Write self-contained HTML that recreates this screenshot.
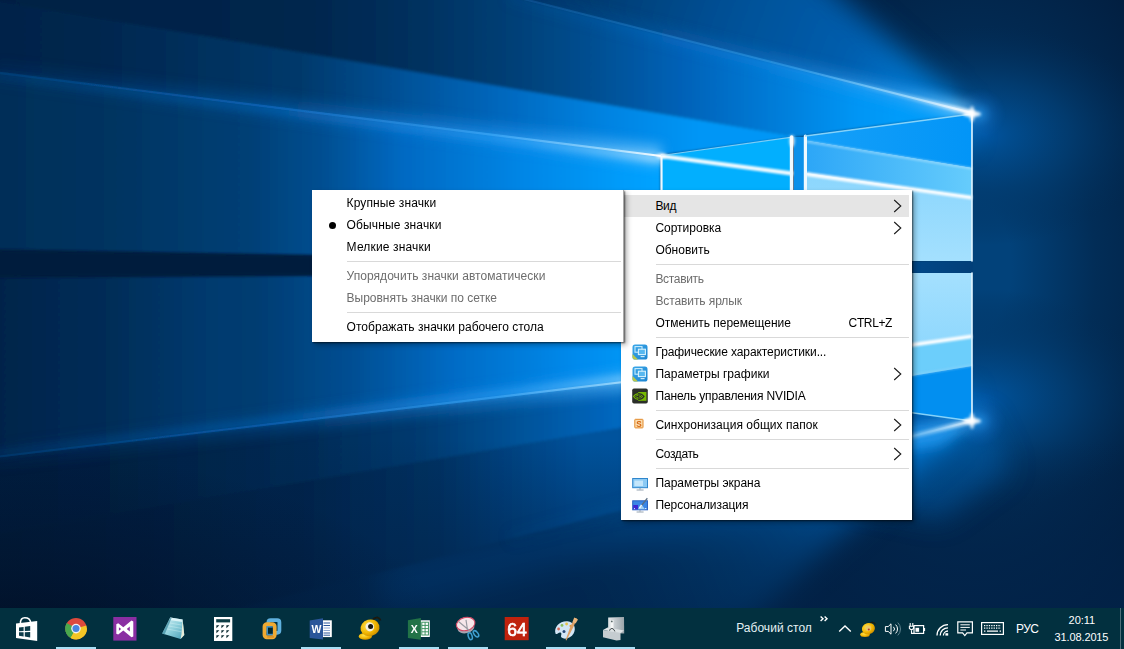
<!DOCTYPE html>
<html lang="ru">
<head>
<meta charset="utf-8">
<title>Рабочий стол</title>
<style>
html,body{margin:0;padding:0;width:1124px;height:649px;overflow:hidden;background:#03264f;}
body{position:relative;font-family:"Liberation Sans",sans-serif;font-size:12px;color:#000;}
#wall{position:absolute;left:0;top:0;display:block;}
.menu{position:absolute;background:#fff;box-sizing:border-box;border:0;box-shadow:1px 1px 1.5px rgba(0,0,0,.55),3px 3px 5px rgba(0,0,0,.3);}
#main{left:621px;top:190px;width:291px;height:330px;}
#sub{left:312px;top:190px;width:312px;height:152px;}
#sub:after{content:"";position:absolute;right:0;top:0;bottom:0;width:1px;background:#a8a8a8;}
.it{position:absolute;left:3px;right:3px;height:22px;line-height:22px;white-space:nowrap;}
.it .l{position:absolute;left:31.4px;top:0;}
#sub .it .l{left:31.6px;}
.it .sc{position:absolute;left:224.6px;top:0;}
.it.dis{color:#6d6d6d;}
.it.hl{background:#e5e5e5;}
.sep{position:absolute;left:35px;right:3px;height:1px;background:#d9d9d9;}
.ch{position:absolute;right:7px;top:4px;}
.ico{position:absolute;left:8px;top:3px;width:16px;height:16px;}
.ico svg{display:block;}
.dot{position:absolute;left:13.8px;top:8.4px;width:7px;height:7px;border-radius:50%;background:#000;}
#tb{position:absolute;left:0;top:608px;width:1124px;height:41px;background:#02303f;color:#fff;}
#tb .ti{position:absolute;top:0;width:48px;height:41px;}
#tb .ul{position:absolute;bottom:0;height:2px;width:40px;background:#a6dcf2;}
#tb .tx{position:absolute;white-space:nowrap;line-height:14px;margin-top:-608px;}
</style>
</head>
<body>
<svg id="wall" width="1124" height="649" viewBox="0 0 1124 649">
<defs>
  <filter id="b1" x="-10%" y="-10%" width="120%" height="120%"><feGaussianBlur stdDeviation="0.7"/></filter>
  <filter id="b2s" x="-10%" y="-40%" width="120%" height="180%"><feGaussianBlur stdDeviation="1.1"/></filter>
  <filter id="b2" x="-10%" y="-10%" width="120%" height="120%"><feGaussianBlur stdDeviation="1.6"/></filter>
  <filter id="b3" x="-10%" y="-30%" width="120%" height="160%"><feGaussianBlur stdDeviation="3"/></filter>
  <filter id="b6" x="-20%" y="-20%" width="140%" height="140%"><feGaussianBlur stdDeviation="6"/></filter>
  <filter id="b14" x="-30%" y="-30%" width="160%" height="160%"><feGaussianBlur stdDeviation="14"/></filter>
  <!-- plane gradients: left (far) -> right (near window) -->
  <linearGradient id="gTopA" gradientUnits="userSpaceOnUse" x1="0" y1="0" x2="900" y2="0">
    <stop offset="0" stop-color="#021f43"/><stop offset="0.34" stop-color="#02264d"/><stop offset="0.45" stop-color="#022f5c"/><stop offset="0.56" stop-color="#023e74"/><stop offset="0.66" stop-color="#014f92"/><stop offset="0.76" stop-color="#0162b8"/><stop offset="0.86" stop-color="#017cd8"/><stop offset="0.95" stop-color="#0295f4"/><stop offset="1" stop-color="#039cfa"/>
  </linearGradient>
  <linearGradient id="gTopB" gradientUnits="userSpaceOnUse" x1="0" y1="0" x2="700" y2="0">
    <stop offset="0" stop-color="#022349"/><stop offset="0.14" stop-color="#02264e"/><stop offset="0.43" stop-color="#01396b"/><stop offset="0.58" stop-color="#015299"/><stop offset="0.72" stop-color="#0068be"/><stop offset="0.86" stop-color="#0182e0"/><stop offset="1" stop-color="#0396f6"/>
  </linearGradient>
  <linearGradient id="gMidU" gradientUnits="userSpaceOnUse" x1="0" y1="0" x2="670" y2="0">
    <stop offset="0" stop-color="#022e58"/><stop offset="0.15" stop-color="#03335f"/><stop offset="0.37" stop-color="#023f75"/><stop offset="0.485" stop-color="#014f92"/><stop offset="0.6" stop-color="#0169c2"/><stop offset="0.78" stop-color="#0186e6"/><stop offset="0.95" stop-color="#039ffd"/><stop offset="1" stop-color="#05a4ff"/>
  </linearGradient>
  <linearGradient id="gMidL" gradientUnits="userSpaceOnUse" x1="0" y1="0" x2="670" y2="0">
    <stop offset="0" stop-color="#02244a"/><stop offset="0.065" stop-color="#022750"/><stop offset="0.155" stop-color="#022c56"/><stop offset="0.3" stop-color="#02396d"/><stop offset="0.38" stop-color="#023c71"/><stop offset="0.53" stop-color="#014f94"/><stop offset="0.68" stop-color="#016cc6"/><stop offset="0.87" stop-color="#028cee"/><stop offset="1" stop-color="#04a0fc"/>
  </linearGradient>
  <linearGradient id="gBotB" gradientUnits="userSpaceOnUse" x1="0" y1="0" x2="700" y2="0">
    <stop offset="0" stop-color="#021c3c"/><stop offset="0.15" stop-color="#021f40"/><stop offset="0.43" stop-color="#022a54"/><stop offset="0.6" stop-color="#013a70"/><stop offset="0.72" stop-color="#014f92"/><stop offset="0.86" stop-color="#0164ba"/><stop offset="1" stop-color="#017ad8"/>
  </linearGradient>
  <linearGradient id="gBotA" gradientUnits="userSpaceOnUse" x1="0" y1="0" x2="972" y2="0">
    <stop offset="0" stop-color="#011a38"/><stop offset="0.31" stop-color="#02234a"/><stop offset="0.45" stop-color="#023263"/><stop offset="0.52" stop-color="#014280"/><stop offset="0.6" stop-color="#01529c"/><stop offset="0.78" stop-color="#01539e"/><stop offset="1" stop-color="#0160b4"/>
  </linearGradient>
  <linearGradient id="gFadeDown" x1="0" y1="0" x2="0" y2="1">
    <stop offset="0" stop-color="#02234a" stop-opacity="0"/><stop offset="0.6" stop-color="#02244b" stop-opacity="0.6"/><stop offset="1" stop-color="#02244b" stop-opacity="0.8"/>
  </linearGradient>
  <radialGradient id="gRight" gradientUnits="userSpaceOnUse" cx="972" cy="267" r="330" gradientTransform="translate(972 267) scale(0.75 1.2) translate(-972 -267)">
    <stop offset="0" stop-color="#02427a"/><stop offset="0.16" stop-color="#02427a"/><stop offset="0.5" stop-color="#022d57"/><stop offset="1" stop-color="#021c3c"/>
  </radialGradient>
  <linearGradient id="gFan" gradientUnits="userSpaceOnUse" x1="972" y1="113" x2="560" y2="-40">
    <stop offset="0" stop-color="#0290f0"/><stop offset="0.3" stop-color="#015eae"/><stop offset="0.62" stop-color="#014f94"/><stop offset="0.9" stop-color="#013c72"/><stop offset="1" stop-color="#01366a"/>
  </linearGradient>
  <linearGradient id="gFan2" gradientUnits="userSpaceOnUse" x1="972" y1="421" x2="560" y2="574">
    <stop offset="0" stop-color="#0290f0"/><stop offset="0.3" stop-color="#0160b2"/><stop offset="0.62" stop-color="#014886"/><stop offset="0.9" stop-color="#01305e"/><stop offset="1" stop-color="#012a54"/>
  </linearGradient>
  <radialGradient id="gBR" gradientUnits="userSpaceOnUse" cx="890" cy="425" r="300" gradientTransform="translate(890 425) scale(1 0.6) translate(-890 -425)">
    <stop offset="0" stop-color="#0170cc"/><stop offset="0.3" stop-color="#01549e"/><stop offset="0.65" stop-color="#023c72" stop-opacity="0.8"/><stop offset="1" stop-color="#022a54" stop-opacity="0"/>
  </radialGradient>
  <linearGradient id="gL2" gradientUnits="userSpaceOnUse" x1="0" y1="0" x2="661" y2="0"><stop offset="0" stop-color="#0a4a8c" stop-opacity="0.45"/><stop offset="0.4" stop-color="#0f66bc" stop-opacity="0.7"/><stop offset="0.75" stop-color="#3aa6f6" stop-opacity="0.8"/><stop offset="0.92" stop-color="#9ad8fd" stop-opacity="0.95"/><stop offset="1" stop-color="#ffffff"/></linearGradient>
  <radialGradient id="gCornerR"><stop offset="0" stop-color="#0154a0"/><stop offset="0.15" stop-color="#014c8e"/><stop offset="0.5" stop-color="#023d72" stop-opacity="0.85"/><stop offset="1" stop-color="#022d57" stop-opacity="0"/></radialGradient>
  <radialGradient id="gBL"><stop offset="0" stop-color="#010c20" stop-opacity="0.85"/><stop offset="1" stop-color="#010c20" stop-opacity="0"/></radialGradient>
  <linearGradient id="gL3" gradientUnits="userSpaceOnUse" x1="508" y1="0" x2="972" y2="0"><stop offset="0" stop-color="#2a86d8" stop-opacity="0.2"/><stop offset="0.6" stop-color="#49b2f6" stop-opacity="0.4"/><stop offset="0.85" stop-color="#9ad8fc" stop-opacity="0.8"/><stop offset="1" stop-color="#ffffff"/></linearGradient>
  <linearGradient id="gL3w" gradientUnits="userSpaceOnUse" x1="820" y1="0" x2="972" y2="0"><stop offset="0" stop-color="#7cc8fa" stop-opacity="0"/><stop offset="0.6" stop-color="#a8dcfc" stop-opacity="0.5"/><stop offset="1" stop-color="#ffffff" stop-opacity="0.95"/></linearGradient>
  <linearGradient id="gBandB" gradientUnits="userSpaceOnUse" x1="805" y1="0" x2="972" y2="0"><stop offset="0" stop-color="#2ca6f7"/><stop offset="1" stop-color="#66ccfc"/></linearGradient>
  <linearGradient id="gBandT" gradientUnits="userSpaceOnUse" x1="805" y1="0" x2="972" y2="0"><stop offset="0" stop-color="#16a0f9"/><stop offset="1" stop-color="#0295f7"/></linearGradient>
  <linearGradient id="gGapH" gradientUnits="userSpaceOnUse" x1="661" y1="0" x2="973" y2="0"><stop offset="0" stop-color="#0166be"/><stop offset="0.6" stop-color="#01529a"/><stop offset="1" stop-color="#023f78"/></linearGradient>
  <linearGradient id="gL2g" gradientUnits="userSpaceOnUse" x1="0" y1="0" x2="661" y2="0"><stop offset="0" stop-color="#0a5cae" stop-opacity="0.1"/><stop offset="0.45" stop-color="#1278d6" stop-opacity="0.3"/><stop offset="0.8" stop-color="#2a9cf6" stop-opacity="0.55"/><stop offset="1" stop-color="#6cc4fc" stop-opacity="0.8"/></linearGradient>
  <linearGradient id="gL3g" gradientUnits="userSpaceOnUse" x1="508" y1="0" x2="972" y2="0"><stop offset="0" stop-color="#0a5cae" stop-opacity="0.1"/><stop offset="0.5" stop-color="#1a84e0" stop-opacity="0.35"/><stop offset="0.85" stop-color="#3aa6f6" stop-opacity="0.6"/><stop offset="1" stop-color="#8fd4fc" stop-opacity="0.85"/></linearGradient>
  <linearGradient id="gMk" gradientUnits="userSpaceOnUse" x1="950" y1="0" x2="1000" y2="0"><stop offset="0" stop-color="#fff"/><stop offset="1" stop-color="#000"/></linearGradient>
  <linearGradient id="gL3b" gradientUnits="userSpaceOnUse" x1="620" y1="0" x2="972" y2="0"><stop offset="0" stop-color="#49b2f6" stop-opacity="0"/><stop offset="0.75" stop-color="#7cc8fa" stop-opacity="0.5"/><stop offset="1" stop-color="#ffffff"/></linearGradient>
  <radialGradient id="gHalo"><stop offset="0" stop-color="#2a9cf2" stop-opacity="0.7"/><stop offset="0.5" stop-color="#1a7cd8" stop-opacity="0.25"/><stop offset="1" stop-color="#0f60b8" stop-opacity="0"/></radialGradient>
  <linearGradient id="gPaneC" gradientUnits="userSpaceOnUse" x1="0" y1="175" x2="0" y2="261"><stop offset="0" stop-color="#8bd6fd"/><stop offset="1" stop-color="#a4e0fe"/></linearGradient>
  <linearGradient id="gPaneC2" gradientUnits="userSpaceOnUse" x1="0" y1="273" x2="0" y2="360"><stop offset="0" stop-color="#a4e0fe"/><stop offset="1" stop-color="#8bd6fd"/></linearGradient>
</defs>
<rect width="1124" height="649" fill="#021c3c"/>
<!-- right side of window / global glow -->
<rect x="0" y="0" width="1124" height="649" fill="url(#gRight)"/>
<ellipse cx="985" cy="135" rx="170" ry="110" fill="url(#gCornerR)"/>
<ellipse cx="985" cy="399" rx="170" ry="110" fill="url(#gCornerR)"/>
<!-- glow above window (above L3) and below window -->
<mask id="mkL" maskUnits="userSpaceOnUse" x="-10" y="-10" width="1144" height="670"><rect x="-10" y="-10" width="1144" height="670" fill="url(#gMk)"/></mask>
<g mask="url(#mkL)"><g filter="url(#b14)">
  <polygon points="350,-40 972,143 985,125 800,-40" fill="url(#gFan)"/>
  <polygon points="-100,660 972,391 985,409 705,660" fill="url(#gFan2)"/>
  <line x1="380" y1="592" x2="860" y2="470" stroke="#0a5cb0" stroke-width="40" opacity="0.5"/>
</g></g>
<!-- planes left of window -->
<g filter="url(#b2)">
<polygon points="-5,-5 508,-5 972,113 800,137 -5,0" fill="url(#gTopA)"/>
<polygon points="-5,0.5 800,137 661,155.5 -5,71.8" fill="url(#gTopB)"/>
<polygon points="-5,71.8 661,155.5 661,262 -5,250" fill="url(#gMidU)"/>
<polygon points="-5,277 661,273 661,378 -5,457.6" fill="url(#gMidL)"/>
<polygon points="-5,457.6 661,378 800,398 -5,534" fill="url(#gBotB)"/>
<polygon points="-5,534 800,398 972,421 240,608 -5,655" fill="url(#gBotA)"/>
</g>
<!-- dark band (gap shadow) -->
<polygon points="-5,250 661,262 661,273 -5,277" fill="#011c3c" filter="url(#b2)"/>
<!-- bottom fade -->
<rect x="0" y="440" width="1124" height="210" fill="url(#gFadeDown)"/>
<ellipse cx="0" cy="649" rx="450" ry="200" fill="url(#gBL)"/>
<!-- bright ray lines -->
<g filter="url(#b6)" fill="none" stroke-linecap="butt">
  <line x1="-5" y1="72.3" x2="661" y2="156" stroke="url(#gL2g)" stroke-width="20"/>
  <line x1="-5" y1="457" x2="661" y2="377.5" stroke="url(#gL2g)" stroke-width="20" opacity="0.8"/>
  <line x1="508" y1="-5" x2="972" y2="113" stroke="url(#gL3g)" stroke-width="16"/>
  <line x1="508" y1="539" x2="972" y2="421" stroke="url(#gL3g)" stroke-width="16" opacity="0.6"/>
</g>
<g filter="url(#b3)" fill="none" stroke-linecap="round">
  <line x1="-5" y1="75" x2="661" y2="159" stroke="url(#gL2)" stroke-width="8" opacity="0.4"/>
  <line x1="-5" y1="454" x2="661" y2="374.5" stroke="url(#gL2)" stroke-width="8" opacity="0.35"/>
</g>
<g filter="url(#b1)" fill="none" stroke-linecap="round">
  <line x1="-5" y1="72.3" x2="661" y2="156" stroke="url(#gL2)" stroke-width="2.2"/>
  <line x1="-5" y1="457" x2="661" y2="377.5" stroke="url(#gL2)" stroke-width="2.2" opacity="0.85"/>
  <line x1="508" y1="-5" x2="972" y2="113" stroke="url(#gL3)" stroke-width="2"/>
  <line x1="620" y1="510.5" x2="972" y2="421" stroke="url(#gL3b)" stroke-width="2" opacity="0.7"/>
</g>
<g filter="url(#b14)"><polygon points="985,415 880,420 850,500 940,520 1010,470" fill="#0a72cc" opacity="0.38"/></g>
<g filter="url(#b6)"><polygon points="972,421 900,427 890,452 940,446" fill="#2a9cf4" opacity="0.6"/></g>
<ellipse cx="980" cy="114" rx="26" ry="26" fill="url(#gHalo)"/>
<ellipse cx="980" cy="421" rx="26" ry="26" fill="url(#gHalo)"/>
<!-- window panes -->
<g>
  <polygon points="661,155.5 793,137 793,262 661,262" fill="#02affe"/>
  <polygon points="805,136 972,114 972,261 805,261" fill="#9bdcfe"/>
  <polygon points="805,136 972,114 972,168 805,140.6" fill="url(#gBandT)"/>
  <polygon points="805,140.6 972,168 972,197 805,173" fill="url(#gBandB)"/>
  <polygon points="805,173 972,197 972,261 805,261" fill="url(#gPaneC)"/>
  <polygon points="805,273 972,273 972,421 805,398" fill="#9bdcfe"/>
  <polygon points="805,273 972,273 972,337 805,361" fill="url(#gPaneC2)"/>
  <polygon points="805,361 972,337 972,366 805,393.4" fill="#6ccefb"/>
  <polygon points="805,393.4 972,366 972,421 805,398" fill="#028ff0"/>
  <polygon points="661,273 793,273 793,398 661,378" fill="#02affe"/>
</g>
<!-- gap between panes -->
<rect x="794" y="137" width="10" height="125" fill="#0a90ea"/>
<rect x="794" y="273" width="10" height="126" fill="#0a90ea"/>
<rect x="661" y="261.8" width="312" height="11" fill="url(#gGapH)"/>
<!-- streaks inside panes -->
<g fill="none" filter="url(#b2s)" stroke-linecap="butt">
  <line x1="661" y1="156" x2="793" y2="173.6" stroke="#ffffff" stroke-width="4.2" opacity="0.95"/>
  <line x1="806" y1="174" x2="972" y2="197.6" stroke="#ffffff" stroke-width="3.8" opacity="0.95"/>
  <line x1="806" y1="360" x2="972" y2="336.4" stroke="#ffffff" stroke-width="3.8" opacity="0.95"/>
  <line x1="806" y1="141.4" x2="972" y2="168.6" stroke="#bfe9fd" stroke-width="2" opacity="0.6"/>
  <line x1="806" y1="392.6" x2="972" y2="365.4" stroke="#9ad6f9" stroke-width="2" opacity="0.5"/>
</g>
<!-- pane edges -->
<g fill="none" stroke-linecap="round" stroke-linejoin="round" filter="url(#b1)">
  <line x1="661.5" y1="262" x2="661.5" y2="155.5" stroke="#eef9ff" stroke-width="2.2"/>
  <line x1="661.5" y1="155.5" x2="792" y2="137.2" stroke="#8fd8fc" stroke-width="1.2" opacity="0.85"/>
  <line x1="791.6" y1="137" x2="791.6" y2="262" stroke="#eef9ff" stroke-width="3.6"/>
  <line x1="805.4" y1="262" x2="805.4" y2="136" stroke="#eef9ff" stroke-width="3.2"/>
  <line x1="805.4" y1="136" x2="972" y2="114" stroke="#8fd8fc" stroke-width="1.3" opacity="0.9"/>
  <line x1="972" y1="114" x2="972" y2="261" stroke="#e4f6ff" stroke-width="1.6"/>
  <line x1="972" y1="273" x2="972" y2="421" stroke="#e4f6ff" stroke-width="1.6"/>
  <line x1="972" y1="421" x2="805" y2="398" stroke="#8fd8fc" stroke-width="1.3" opacity="0.9"/>
</g>
<g filter="url(#b2)" fill="none" stroke-linecap="round">
  <line x1="820" y1="74.4" x2="972" y2="113" stroke="url(#gL3w)" stroke-width="5"/>
  <line x1="820" y1="459.6" x2="972" y2="421" stroke="url(#gL3w)" stroke-width="5" opacity="0.8"/>
</g>
<!-- corner flares -->
<g filter="url(#b2)">
  <ellipse cx="972" cy="114" rx="9" ry="3" fill="#ffffff" opacity="0.9"/>
  <ellipse cx="972" cy="114" rx="2.5" ry="8" fill="#ffffff" opacity="0.8"/>
  <ellipse cx="972" cy="421" rx="9" ry="3" fill="#ffffff" opacity="0.9"/>
  <ellipse cx="972" cy="421" rx="2.5" ry="8" fill="#ffffff" opacity="0.8"/>
  <ellipse cx="661.5" cy="156" rx="5" ry="2.5" fill="#ffffff" opacity="0.8"/>
  <ellipse cx="792" cy="141" rx="2.5" ry="6" fill="#ffffff" opacity="0.85"/>
</g>
</svg>
<div class="menu" id="main"><div class="it hl" style="top:5px"><span class="l" style="letter-spacing:-0.273px">Вид</span><svg class="ch" width="9" height="14" viewBox="0 0 9 14"><path d="M1.2 1 L7.8 7 L1.2 13" fill="none" stroke="#1a1a1a" stroke-width="1.1"/></svg></div><div class="it" style="top:27px"><span class="l" style="letter-spacing:-0.006px">Сортировка</span><svg class="ch" width="9" height="14" viewBox="0 0 9 14"><path d="M1.2 1 L7.8 7 L1.2 13" fill="none" stroke="#1a1a1a" stroke-width="1.1"/></svg></div><div class="it" style="top:49px"><span class="l" style="letter-spacing:-0.005px">Обновить</span></div><div class="sep" style="top:74px"></div><div class="it dis" style="top:78px"><span class="l" style="letter-spacing:-0.322px">Вставить</span></div><div class="it dis" style="top:100px"><span class="l" style="letter-spacing:-0.096px">Вставить ярлык</span></div><div class="it" style="top:122px"><span class="l" style="letter-spacing:-0.027px">Отменить перемещение</span><span class="sc" style="letter-spacing:-0.364px">CTRL+Z</span></div><div class="sep" style="top:147px"></div><div class="it" style="top:151px"><span class="ico"><svg width="16" height="16" viewBox="0 0 16 16"><defs><linearGradient id="gi" x1="0" y1="0" x2="1" y2="1"><stop offset="0" stop-color="#3aa8ea"/><stop offset="1" stop-color="#1c84d0"/></linearGradient></defs><rect x="0.5" y="0.5" width="15" height="15" rx="2.6" fill="url(#gi)"/><path d="M0.5 10 L6 15.5 L3 15.5 Q0.5 15.5 0.5 13 Z" fill="#b8c84a"/><rect x="3" y="2.6" width="7" height="5.6" fill="none" stroke="#c8ecfc" stroke-width="1.1"/><rect x="6.4" y="5.2" width="7" height="5.4" fill="#58b8f0" stroke="#d8f2fd" stroke-width="1.1"/><path d="M8.6 12.6 L12.6 12.6" stroke="#c8ecfc" stroke-width="1.2"/></svg>
</span><span class="l" style="letter-spacing:-0.086px">Графические характеристики...</span></div><div class="it" style="top:173px"><span class="ico"><svg width="16" height="16" viewBox="0 0 16 16"><defs><linearGradient id="gi" x1="0" y1="0" x2="1" y2="1"><stop offset="0" stop-color="#3aa8ea"/><stop offset="1" stop-color="#1c84d0"/></linearGradient></defs><rect x="0.5" y="0.5" width="15" height="15" rx="2.6" fill="url(#gi)"/><path d="M0.5 10 L6 15.5 L3 15.5 Q0.5 15.5 0.5 13 Z" fill="#b8c84a"/><rect x="3" y="2.6" width="7" height="5.6" fill="none" stroke="#c8ecfc" stroke-width="1.1"/><rect x="6.4" y="5.2" width="7" height="5.4" fill="#58b8f0" stroke="#d8f2fd" stroke-width="1.1"/><path d="M8.6 12.6 L12.6 12.6" stroke="#c8ecfc" stroke-width="1.2"/></svg>
</span><span class="l" style="letter-spacing:0.026px">Параметры графики</span><svg class="ch" width="9" height="14" viewBox="0 0 9 14"><path d="M1.2 1 L7.8 7 L1.2 13" fill="none" stroke="#1a1a1a" stroke-width="1.1"/></svg></div><div class="it" style="top:195px"><span class="ico"><svg width="16" height="16" viewBox="0 0 16 16"><rect x="0.2" y="0.4" width="15.6" height="15.2" rx="1.8" fill="#2b2f29"/><path d="M6.2 4 L14.4 4 L14.4 12.8 L6.2 12.8 Z" fill="#76b900"/><path d="M6.2 5.6 C3.8 5.9 2.2 7.4 1.6 8.4 C2.6 10.2 4.4 11.2 6.2 11.4" fill="none" stroke="#76b900" stroke-width="1.1"/><path d="M6.2 7 C5 7.2 4.2 7.9 3.8 8.5 C4.4 9.4 5.2 9.9 6.2 10" fill="none" stroke="#76b900" stroke-width="1"/><path d="M6.2 5.6 C8.6 5.4 10.8 6.8 12 8.4 C10.8 10.2 8.6 11.6 6.2 11.4" fill="none" stroke="#2b2f29" stroke-width="1.1"/><path d="M6.2 7 C7.6 6.9 8.8 7.6 9.6 8.5 C8.8 9.4 7.6 10.1 6.2 10" fill="none" stroke="#2b2f29" stroke-width="1"/><circle cx="6.6" cy="8.5" r="0.9" fill="#2b2f29"/></svg>
</span><span class="l" style="letter-spacing:-0.137px">Панель управления NVIDIA</span></div><div class="sep" style="top:220px"></div><div class="it" style="top:224px"><span class="ico"><svg width="16" height="16" viewBox="0 0 16 16"><rect x="2.8" y="2.3" width="8.2" height="8.6" rx="0.6" fill="#fbdcae" stroke="#e38a2a" stroke-width="1"/><text x="6.9" y="9.6" font-family="Liberation Sans, sans-serif" font-weight="bold" font-size="8.2" fill="#d4650f" text-anchor="middle">S</text></svg>
</span><span class="l" style="letter-spacing:0.047px">Синхронизация общих папок</span><svg class="ch" width="9" height="14" viewBox="0 0 9 14"><path d="M1.2 1 L7.8 7 L1.2 13" fill="none" stroke="#1a1a1a" stroke-width="1.1"/></svg></div><div class="sep" style="top:249px"></div><div class="it" style="top:253px"><span class="l" style="letter-spacing:-0.358px">Создать</span><svg class="ch" width="9" height="14" viewBox="0 0 9 14"><path d="M1.2 1 L7.8 7 L1.2 13" fill="none" stroke="#1a1a1a" stroke-width="1.1"/></svg></div><div class="sep" style="top:278px"></div><div class="it" style="top:282px"><span class="ico"><svg width="16" height="16" viewBox="0 0 16 16"><rect x="0.7" y="3.5" width="14.8" height="9.2" fill="#8ccaf4" stroke="#2f86cc" stroke-width="1"/><rect x="2.4" y="5.6" width="8.6" height="5.4" fill="#c4e6fb"/><path d="M8 13 L8 14.6 M4.6 15 L11.6 15" stroke="#8a9aa8" stroke-width="0.9"/></svg>
</span><span class="l" style="letter-spacing:-0.026px">Параметры экрана</span></div><div class="it" style="top:304px"><span class="ico"><svg width="16" height="16" viewBox="0 0 16 16"><rect x="0.7" y="3.8" width="14.8" height="9" fill="#3a86e6" stroke="#2a62c4" stroke-width="1"/><path d="M1.2 8 L6 8 L6 12.3 L1.2 12.3 Z" fill="#3c28d2"/><path d="M6 12.3 L9 7 L13 12.3 Z" fill="#9fd0f6"/><path d="M14.9 0.8 L15.8 1.8 L10.4 8.6 L8.6 10.4 L9.2 7.8 Z" fill="#5a6e84"/><path d="M9.2 7.8 L10.4 8.6 L8 11.4 L6.8 10.8 Z" fill="#eef6fc"/><path d="M2 11.6 L3 11.6 M13 11.6 L14.4 11.6" stroke="#fff" stroke-width="0.9"/><path d="M8 13 L8 14.6 M4.6 15 L11.6 15" stroke="#8a9aa8" stroke-width="0.9"/></svg>
</span><span class="l" style="letter-spacing:-0.075px">Персонализация</span></div></div><div class="menu" id="sub"><div class="it" style="top:2px"><span class="l" style="letter-spacing:0.119px">Крупные значки</span></div><div class="it" style="top:24px"><i class="dot"></i><span class="l" style="letter-spacing:0.129px">Обычные значки</span></div><div class="it" style="top:46px"><span class="l" style="letter-spacing:0.160px">Мелкие значки</span></div><div class="sep" style="top:71px"></div><div class="it dis" style="top:75px"><span class="l" style="letter-spacing:0.044px">Упорядочить значки автоматически</span></div><div class="it dis" style="top:97px"><span class="l" style="letter-spacing:-0.023px">Выровнять значки по сетке</span></div><div class="sep" style="top:122px"></div><div class="it" style="top:126px"><span class="l" style="letter-spacing:0.027px">Отображать значки рабочего стола</span></div></div><div id="tb">
<svg id="tbi" width="1124" height="41" viewBox="0 608 1124 41" style="position:absolute;left:0;top:0">
<defs>
  <linearGradient id="gNote" x1="0" y1="0" x2="1" y2="1"><stop offset="0" stop-color="#d8f2f6"/><stop offset="0.5" stop-color="#8fd0dc"/><stop offset="1" stop-color="#4a9fb8"/></linearGradient>
  <radialGradient id="gBee" cx="0.4" cy="0.35" r="0.7"><stop offset="0" stop-color="#ffe14a"/><stop offset="0.6" stop-color="#f2b705"/><stop offset="1" stop-color="#c98a00"/></radialGradient>
  <linearGradient id="gSrv" x1="0" y1="0" x2="1" y2="0"><stop offset="0" stop-color="#e4e8ea"/><stop offset="1" stop-color="#9aa4aa"/></linearGradient>
  <filter id="ib" x="-10%" y="-10%" width="120%" height="120%"><feGaussianBlur stdDeviation="0.35"/></filter>
</defs>
<!-- active underlines -->
<g fill="#a8dff5">
  <rect x="56" y="647" width="40" height="2"/><rect x="301" y="647" width="40" height="2"/><rect x="399" y="647" width="40" height="2"/>
  <rect x="448" y="647" width="40" height="2"/><rect x="546" y="647" width="40" height="2"/><rect x="595" y="647" width="40" height="2"/>
</g>
<g filter="url(#ib)">
<!-- Store -->
<g>
  <path d="M20.4 623.4 C20.4 619 22.8 617.7 24.8 617.7 C27.6 617.7 30.2 619 30.6 622.2" fill="none" stroke="#fff" stroke-width="1.5"/>
  <polygon points="16,623.4 37.2,621 37.2,641 16,637.9" fill="#fff"/>
  <g fill="#0a3a48"><polygon points="19,627.6 23.6,626.9 23.6,631 19,631.2"/><polygon points="24.8,626.7 30.2,625.9 30.2,630.8 24.8,631"/><polygon points="19,632.3 23.6,632.2 23.6,636.4 19,635.8"/><polygon points="24.8,632.2 30.2,632.1 30.2,637.4 24.8,636.6"/></g>
</g>
<!-- Chrome -->
<g>
  <circle cx="76" cy="628.6" r="10.7" fill="#dd4a3c"/>
  <path d="M76 628.6 L66.7 623.3 A10.7 10.7 0 0 0 70.7 637.9 L76 628.6Z" fill="#48a84e"/>
  <path d="M66.7 623.3 A10.7 10.7 0 0 0 71.2 638.2 L77.5 629 Z" fill="#48a84e"/>
  <path d="M76 628.6 L86.7 628.6 A10.7 10.7 0 0 1 70.7 637.9 Z" fill="#f4c628"/>
  <path d="M86.3 625.4 A10.7 10.7 0 0 1 70.7 637.9 L76 628.6 Z" fill="#f4c628"/>
  <circle cx="76" cy="628.6" r="4.8" fill="#f1f1f1"/>
  <circle cx="76" cy="628.6" r="3.5" fill="#4a85e0"/>
</g>
<!-- Visual Studio -->
<g>
  <rect x="113.3" y="617" width="23.2" height="23.6" fill="#8a2da2"/>
  <path d="M131.5 620.6 L133.3 621.4 L133.3 636.4 L131.5 637.2 L123.3 630.6 L118.2 634.6 L116.3 633.7 L116.3 624.2 L118.2 623.3 L123.3 627.3 Z M118.9 627.2 L118.9 630.7 L121.2 628.95 Z M129.8 626.4 L126.8 628.95 L129.8 631.5 Z" fill="#fff" fill-rule="evenodd"/>
</g>
<!-- Notepad -->
<g>
  <polygon points="170.3,617.6 182.6,619.5 184.3,635 180.6,639 162.2,633.6" fill="url(#gNote)"/>
  <polygon points="182.6,619.5 184.3,635 180.6,639 181.5,634" fill="#e8ecd8"/>
  <polygon points="170.3,617.6 182.6,619.5 182.2,622 169.2,620" fill="#e6f8fa" opacity="0.85"/>
  <polygon points="170.3,617.6 171.6,618 164.6,634.4 162.2,633.6" fill="#3a8aa0" opacity="0.7"/>
  <path d="M170 623 L181.5 625 M168.6 626 L181.6 628.4 M167.2 629 L181.6 631.8" stroke="#e0f6fa" stroke-width="0.6" opacity="0.6" fill="none"/>
</g>
<!-- Calculator -->
<g>
  <rect x="214" y="617" width="18.3" height="24" fill="#fff"/>
  <rect x="216.2" y="619.2" width="13.9" height="3.2" fill="#0a3c44"/>
  <g fill="#0a2a30">
    <polygon points="216.4,625.3 219.4,625.3 216.4,628.3"/><polygon points="221.4,625.3 224.4,625.3 221.4,628.3"/><polygon points="226.4,625.3 229.4,625.3 226.4,628.3"/>
    <polygon points="216.4,630.3 219.4,630.3 216.4,633.3"/><polygon points="221.4,630.3 224.4,630.3 221.4,633.3"/><polygon points="226.4,630.3 229.4,630.3 226.4,633.3"/>
    <polygon points="216.4,635.3 219.4,635.3 216.4,638.3"/><polygon points="221.4,635.3 224.4,635.3 221.4,638.3"/><polygon points="226.4,635.3 229.4,635.3 226.4,638.3"/>
  </g>
</g>
<!-- VMware -->
<g fill="none" stroke-linejoin="round">
  <rect x="268.4" y="620.2" width="11" height="12.6" rx="2.2" stroke="#5fb0de" stroke-width="3.8"/>
  <rect x="264.6" y="624.2" width="10" height="13" rx="2.2" stroke="#f0aa32" stroke-width="4"/>
  <path d="M267.2 636.9 L274 636.9" stroke="#d8902a" stroke-width="1.6"/>
  <rect x="266.6" y="626.2" width="6" height="9" fill="#3f8fc4" stroke="none"/>
  <rect x="268" y="627.6" width="4.8" height="6.2" fill="#06262e" stroke="none"/>
</g>
<!-- Word -->
<g>
  <rect x="322" y="620.3" width="9.8" height="16.8" fill="#fff"/>
  <g stroke="#2b579a" stroke-width="1"><line x1="323.5" y1="623" x2="330" y2="623"/><line x1="323.5" y1="625.5" x2="330" y2="625.5"/><line x1="323.5" y1="628" x2="330" y2="628" stroke="#8fa8d0"/><line x1="323.5" y1="630.5" x2="330" y2="630.5" stroke="#8fa8d0"/><line x1="323.5" y1="633" x2="330" y2="633"/><line x1="323.5" y1="635.2" x2="330" y2="635.2"/></g>
  <polygon points="309.7,620.6 323,618.2 323,639.4 309.7,637.9" fill="#2b579a"/>
  <text x="316.4" y="632.8" font-family="Liberation Sans, sans-serif" font-weight="bold" font-size="10.5" fill="#fff" text-anchor="middle">W</text>
</g>
<!-- Bee -->
<g>
  <path d="M373 619.5 C375 616.8 379.5 616.8 380.5 620.5" fill="none" stroke="#1c1a10" stroke-width="1.6"/>
  <ellipse cx="365.3" cy="636.4" rx="6.6" ry="3.3" fill="url(#gBee)"/>
  <ellipse cx="370" cy="627.8" rx="9.6" ry="8.3" fill="url(#gBee)" transform="rotate(-15 370 627.8)"/>
  <ellipse cx="369.8" cy="626.8" rx="4.3" ry="4.6" fill="#f4f0e0" transform="rotate(-20 369.8 626.8)"/>
  <circle cx="370.6" cy="626.6" r="2.5" fill="#15130e"/>
</g>
<!-- Excel -->
<g>
  <rect x="420" y="620.3" width="9.8" height="16.7" fill="#fff"/>
  <g fill="none" stroke="#2f8a55" stroke-width="0.9"><rect x="421.8" y="622.2" width="6.6" height="12.8"/><path d="M425.1 622.2 V635 M421.8 625.4 H428.4 M421.8 628.6 H428.4 M421.8 631.8 H428.4"/></g>
  <polygon points="407.9,620.2 420.9,617.9 420.9,639.8 407.9,638" fill="#217346"/>
  <text x="414.3" y="632.9" font-family="Liberation Sans, sans-serif" font-weight="bold" font-size="10.5" fill="#fff" text-anchor="middle">X</text>
</g>
<!-- Snipping tool -->
<g>
  <ellipse cx="466" cy="628" rx="8.5" ry="5.2" fill="#a8a4b0" transform="rotate(-12 466 628)"/>
  <ellipse cx="465.7" cy="624" rx="9.4" ry="6.6" fill="#f6e6ea" stroke="#d24a66" stroke-width="1.1" transform="rotate(-14 465.7 624)"/>
  <path d="M458.5 621.5 L470 631 M466 619.8 L467.5 630" stroke="#9a9aa2" stroke-width="1.2" fill="none"/>
  <ellipse cx="476" cy="633.8" rx="1.9" ry="3.6" fill="none" stroke="#3f9fd0" stroke-width="1.5" transform="rotate(-38 476 633.8)"/>
  <ellipse cx="470.2" cy="636.2" rx="1.9" ry="3.6" fill="none" stroke="#3f9fd0" stroke-width="1.5" transform="rotate(-18 470.2 636.2)"/>
</g>
<!-- AIDA64 -->
<g>
  <rect x="504.7" y="617" width="24" height="23.2" fill="#bf200d"/>
  <text x="517" y="636.2" font-family="Liberation Sans, sans-serif" font-size="18.8" fill="#fff" stroke="#fff" stroke-width="0.7" text-anchor="middle" textLength="19.6" lengthAdjust="spacingAndGlyphs">64</text>
</g>
<!-- Paint -->
<g>
  <path d="M555.5 633.5 C553.5 627 560 620.6 567.5 621.2 C574 621.8 576.6 628 573.6 633.6 C571 638.2 564.5 640 561.6 637.6 C560 636.2 562.6 633.8 560.6 632.6 C558.8 631.6 556.5 635.6 555.5 633.5 Z" fill="#d3e6f5"/>
  <circle cx="558.6" cy="629" r="1.4" fill="#d86a5a"/><circle cx="562" cy="625.4" r="1.4" fill="#8cc05a"/><circle cx="566.6" cy="624" r="1.4" fill="#e8c24a"/><circle cx="570.8" cy="626" r="1.3" fill="#e09a3a"/>
  <circle cx="564" cy="631.4" r="1.5" fill="#2a4a78"/>
  <path d="M577 618.6 L573.4 627 L566.4 640.6 L565.6 640 L570.6 626 L574.6 618 Z" fill="#dca066"/>
  <path d="M574.2 617.6 L578 619.6 L575.6 623.4 L572.6 622 Z" fill="#eab57c"/>
</g>
<!-- Server manager -->
<g>
  <polygon points="608.2,617.4 624,617 624.2,633.5 608.2,633" fill="url(#gSrv)"/>
  <rect x="610.5" y="620" width="3" height="8" fill="#f4f6f6"/>
  <circle cx="611.8" cy="621.4" r="0.9" fill="#5a6a6a"/>
  <polygon points="603,630 620.5,633 620.5,640 616.5,640.4 603,637.2" fill="#c5ccd0"/>
  <polygon points="603,630 607.5,627.6 624,630.6 620.5,633" fill="#dfe4e6"/>
  <path d="M609.6 630.6 C610.5 627.6 613.5 627.8 614.8 631.4" fill="none" stroke="#2a3436" stroke-width="1"/>
</g>
</g>
<!-- tray -->
<g fill="none" stroke="#fff">
  <!-- » -->
  <path d="M820.6 616.6 L823 618.8 L820.6 621 M824.6 616.6 L827 618.8 L824.6 621" stroke-width="1.4"/>
  <!-- ^ -->
  <path d="M839.2 631.6 L845 626 L850.8 631.6" stroke-width="1.4"/>
  <!-- speaker -->
  <path d="M885.4 626.6 L888.2 626.6 L891 623.8 L891 634.2 L888.2 631.4 L885.4 631.4 Z" stroke-width="1"/>
  <path d="M893.4 626.8 A3 3 0 0 1 893.4 631.2" stroke-width="1"/>
  <path d="M895.6 624.6 A6 6 0 0 1 895.6 633.4" stroke-width="1"/>
  <path d="M897.8 622.6 A9 9 0 0 1 897.8 635.4" stroke-width="1" stroke="#5f8490"/>
  <!-- battery -->
  <rect x="914" y="625.6" width="9.6" height="7.8" stroke-width="1.2"/>
  <path d="M924.4 628 L924.4 631" stroke-width="1.4"/>
  <rect x="915.5" y="627.8" width="3.6" height="4" fill="#fff" stroke="none"/>
  <path d="M910.2 623 L910.2 626 M912.8 623 L912.8 626 M909.4 626.2 L913.6 626.2 L913.6 628.4 L911.5 630 L909.4 628.4 Z M911.5 630 L911.5 633.4 L914 633.4" stroke-width="1.1"/>
  <!-- wifi -->
  <path d="M937 635.6 A11 11 0 0 1 948 624.6" stroke-width="1.3"/>
  <path d="M940.2 635.6 A7.8 7.8 0 0 1 948 627.8" stroke-width="1.3"/>
  <path d="M943.4 635.6 A4.6 4.6 0 0 1 948 631" stroke-width="1.3"/>
  <rect x="945.4" y="633.2" width="2.8" height="2.4" fill="#fff" stroke="none"/>
  <!-- action center -->
  <path d="M957.8 621.8 L972.4 621.8 L972.4 632.8 L967 632.8 L964.8 635.6 L962.6 632.8 L957.8 632.8 Z" stroke-width="1.2"/>
  <path d="M960.4 624.8 L969.8 624.8 M960.4 627.4 L969.8 627.4 M960.4 630 L966 630" stroke-width="1"/>
  <!-- keyboard -->
  <rect x="981.6" y="622.6" width="21.8" height="11.8" stroke-width="1.2"/>
  <path d="M984 625.6 L1001 625.6 M984 628.2 L1001 628.2" stroke-width="1.2" stroke-dasharray="1.3 1.1"/>
  <path d="M984 631.2 L985.4 631.2 M987 631.2 L998 631.2 M999.6 631.2 L1001 631.2" stroke-width="1.2"/>
</g>
<!-- tray bee -->
<g filter="url(#ib)">
  <path d="M870 623.6 C871.5 621.8 874.5 622 875.4 624.4" fill="none" stroke="#1c1a10" stroke-width="1.1"/>
  <ellipse cx="865" cy="634.6" rx="4.8" ry="2.5" fill="url(#gBee)"/>
  <ellipse cx="868.4" cy="628.6" rx="6.6" ry="5.6" fill="url(#gBee)" transform="rotate(-15 868.4 628.6)"/>
  <ellipse cx="868.3" cy="628.2" rx="2.8" ry="2.6" fill="#e9c86a"/>
  <circle cx="868.8" cy="629.6" r="1" fill="#c0392b"/>
</g>
<rect x="1120" y="608" width="1" height="41" fill="#4f6f7a"/>
</svg>
<span class="tx" style="left:736.2px;top:621px;letter-spacing:0.03px;color:#e4f0f4">Рабочий стол</span>
<span class="tx" style="left:1016px;top:621.8px;letter-spacing:-0.55px">РУС</span>
<span class="tx" style="left:1068.6px;top:612.8px;font-size:11px;letter-spacing:-0.05px">20:11</span>
<span class="tx" style="left:1054.6px;top:630px;font-size:11px;letter-spacing:-0.13px">31.08.2015</span>
</div>

</body>
</html>
